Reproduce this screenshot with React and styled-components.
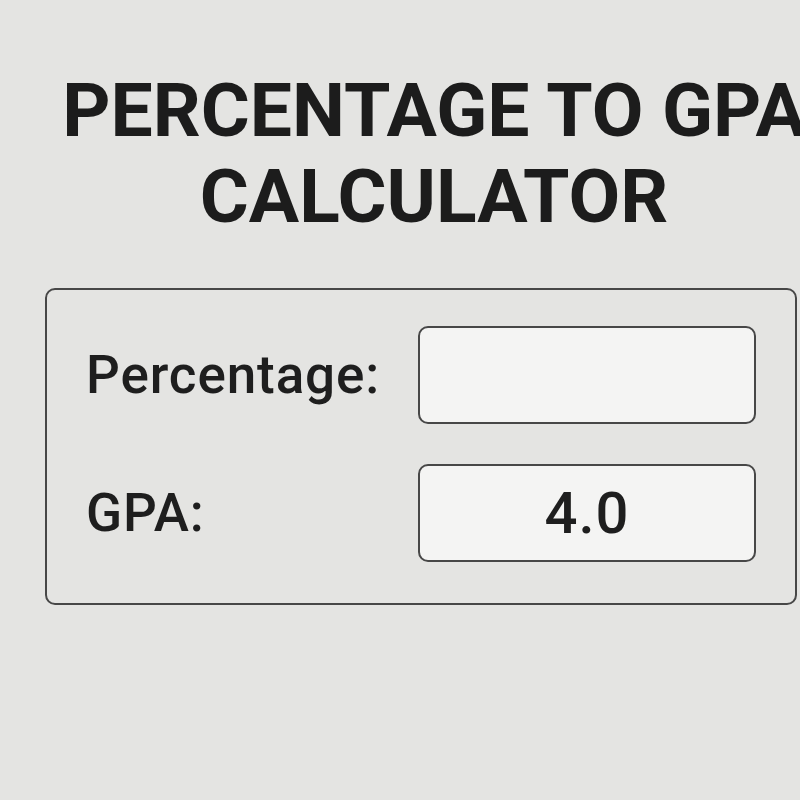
import styled, { createGlobalStyle } from "styled-components";

const GlobalStyle = createGlobalStyle`
  html, body {
    margin: 0;
    padding: 0;
    background: #e4e4e2;
    overflow: hidden;
  }
  body {
    font-family: Roboto, "Liberation Sans", Arial, sans-serif;
    color: #1e1e1e;
  }
`;

const Page = styled.div`
  width: 800px;
  height: 800px;
  padding-top: 67px;
  box-sizing: border-box;
  display: flex;
  flex-direction: column;
  overflow: hidden;
`;

const Title = styled.h1`
  width: 868px;
  margin: 0;
  font-family: Roboto, "Liberation Sans", sans-serif;
  font-weight: 700;
  font-size: 75px;
  line-height: 86px;
  text-align: center;
  white-space: nowrap;
  color: #1c1c1c;
`;

const Panel = styled.div`
  margin: 49px 3px 0 45px;
  border: 2px solid #474747;
  border-radius: 10px;
  padding: 36px 39px 41px 39px;
  display: grid;
  grid-template-columns: 1fr 338px;
  row-gap: 40px;
  align-items: center;
`;

const Label = styled.label`
  font-family: Roboto, "Liberation Sans", sans-serif;
  font-weight: 500;
  font-size: 53px;
  letter-spacing: 0.9px;
  color: #1e1e1e;
`;

const Field = styled.input`
  box-sizing: border-box;
  width: 338px;
  height: 98px;
  margin: 0;
  padding: 0 12px;
  border: 2px solid #474747;
  border-radius: 10px;
  background: #f4f4f3;
  font-family: Roboto, "Liberation Sans", sans-serif;
  font-weight: 500;
  font-size: 58px;
  letter-spacing: 1px;
  text-align: center;
  color: #1e1e1e;
  outline: none;
`;

export default function App() {
  return (
    <>
      <GlobalStyle />
      <Page>
        <Title>
          PERCENTAGE TO GPA
          <br />
          CALCULATOR
        </Title>
        <Panel>
          <Label htmlFor="pct">Percentage:</Label>
          <Field id="pct" type="text" defaultValue="" />
          <Label htmlFor="gpa">GPA:</Label>
          <Field id="gpa" type="text" value="4.0" readOnly />
        </Panel>
      </Page>
    </>
  );
}
